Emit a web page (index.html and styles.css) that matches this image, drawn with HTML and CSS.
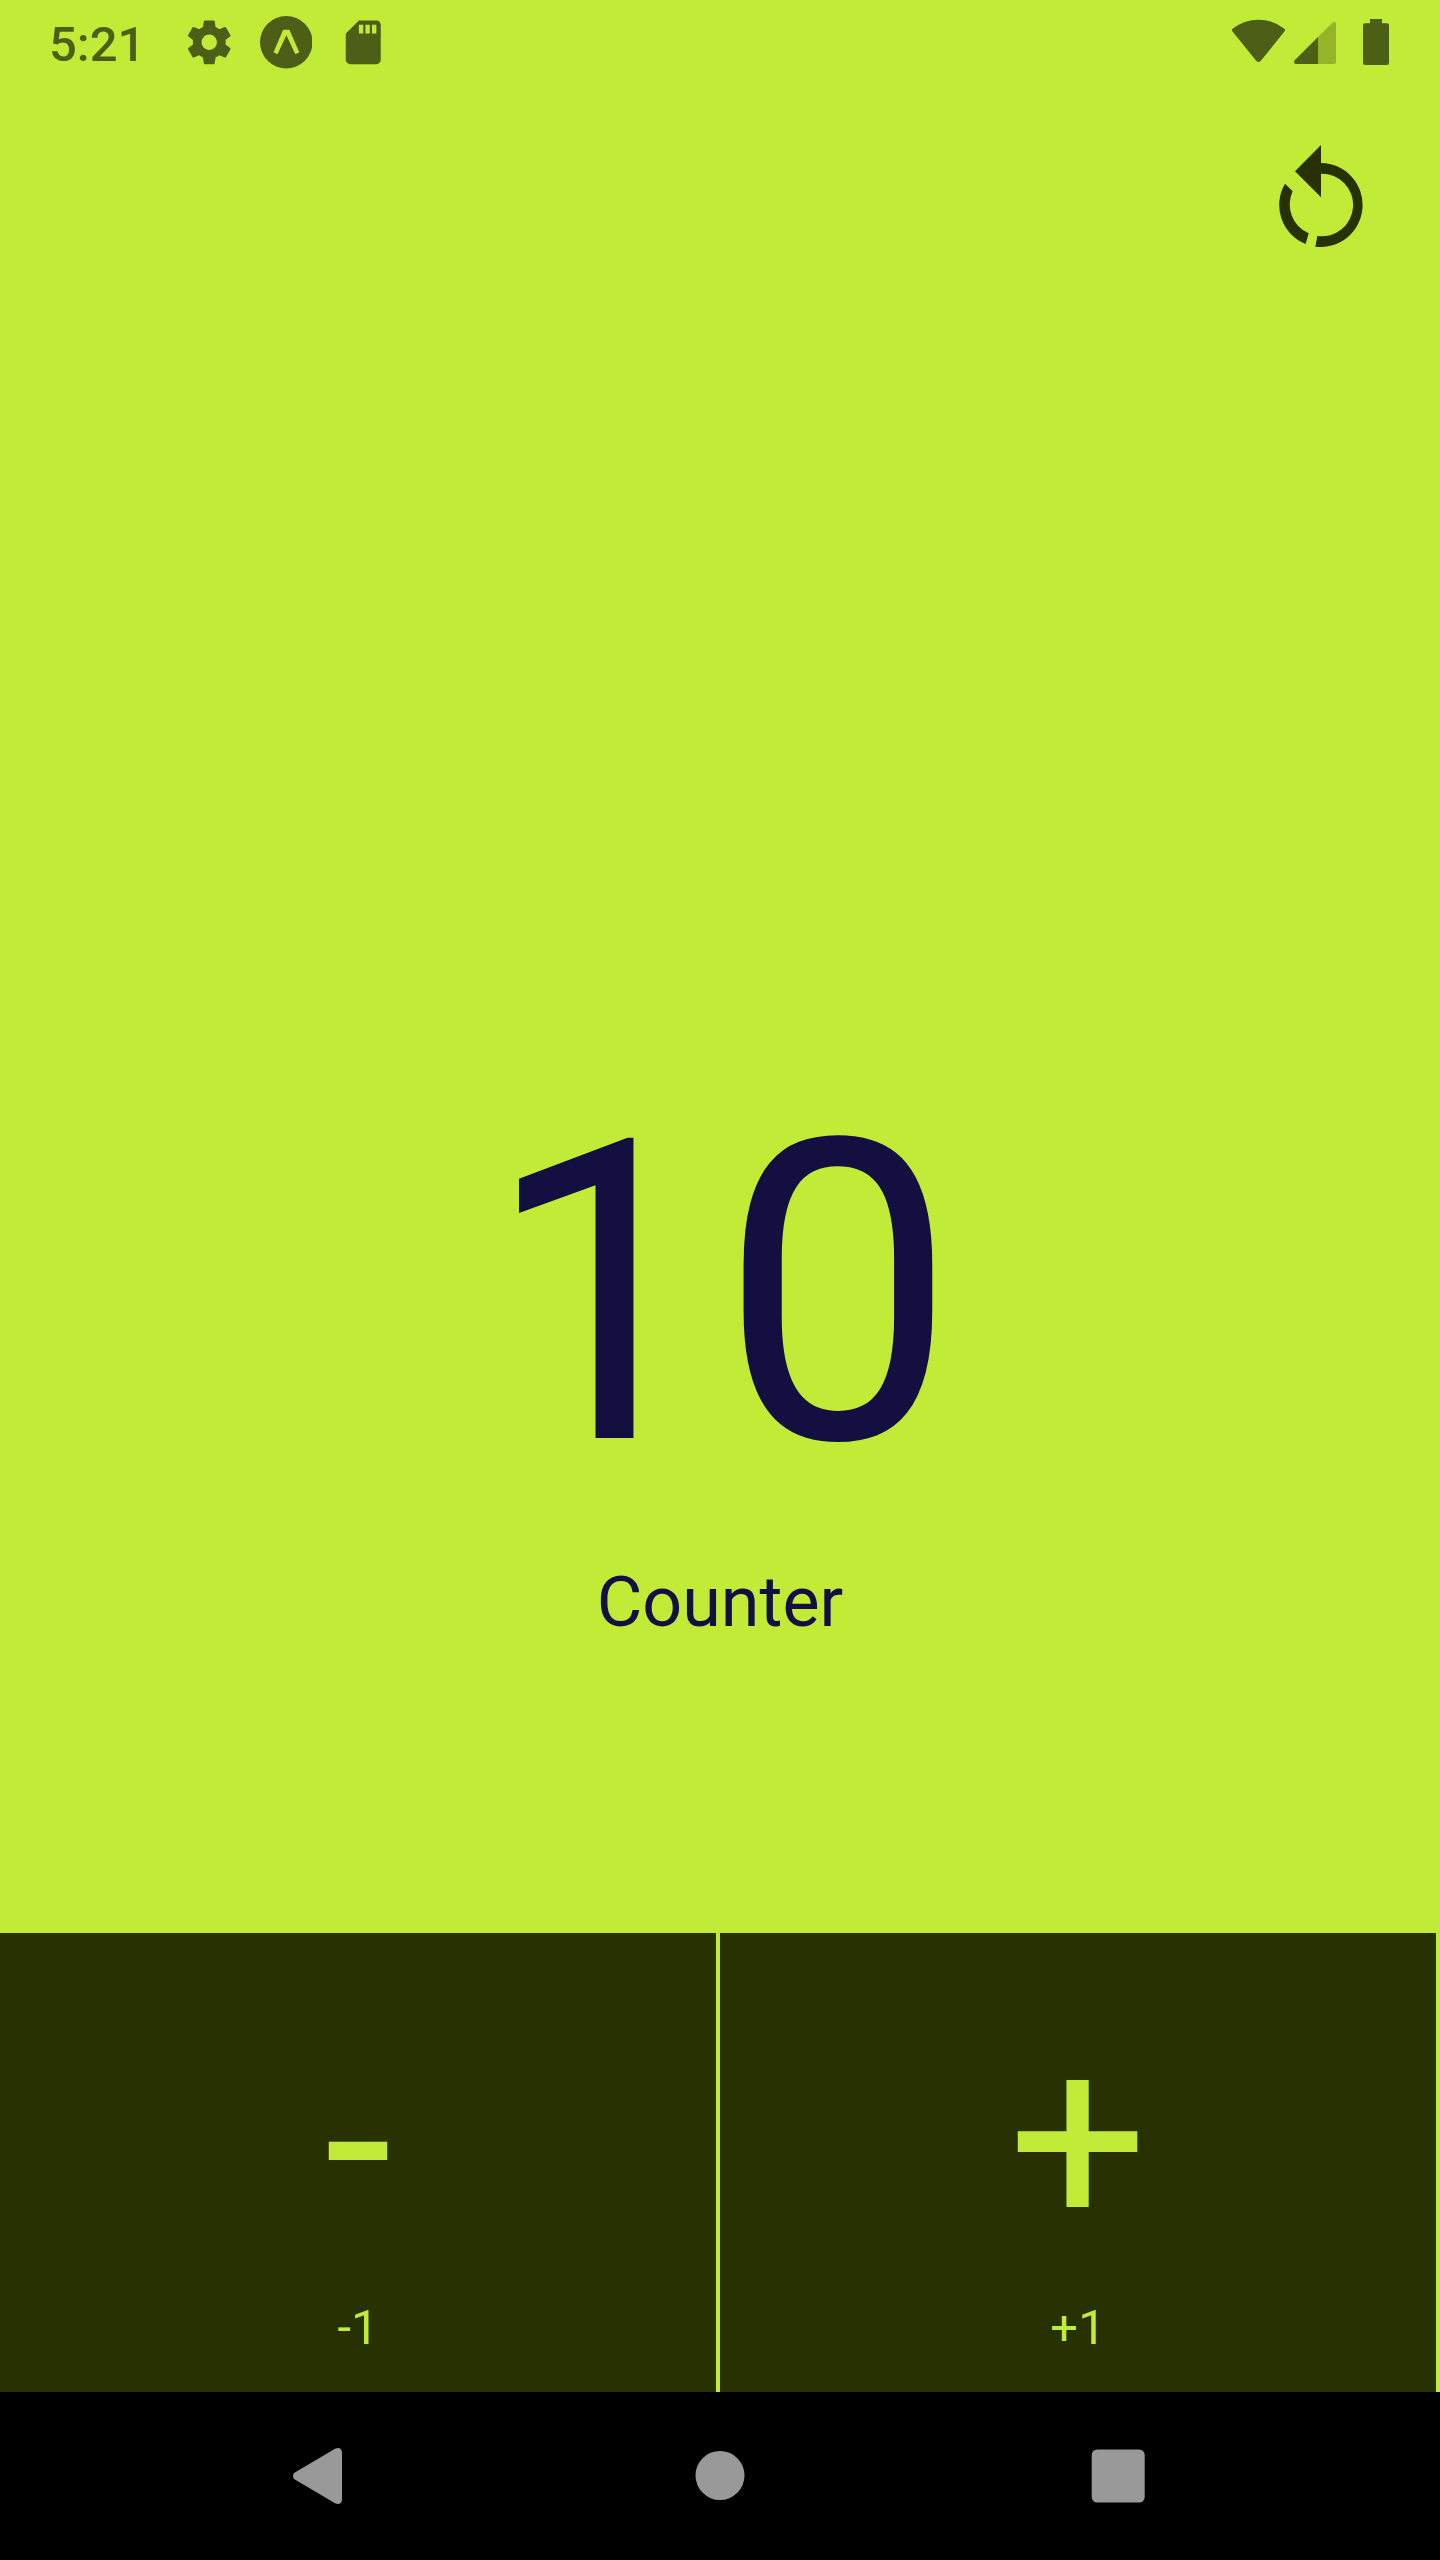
FILE: index.html
```html
<!DOCTYPE html>
<html lang="en">
<head>
<meta charset="utf-8">
<title>Counter</title>
<link rel="stylesheet" href="styles.css">
</head>
<body>
<div class="screen">
  <header class="status">
    <span class="time">5:21</span>
    <div class="notices">
      <svg class="notice" viewBox="0 0 24 24"><path d="M19.43 12.98c.04-.32.07-.64.07-.98s-.03-.66-.07-.98l2.11-1.65c.19-.15.24-.42.12-.64l-2-3.46c-.12-.22-.39-.3-.61-.22l-2.49 1c-.52-.4-1.08-.73-1.69-.98l-.38-2.65C14.46 2.18 14.25 2 14 2h-4c-.25 0-.46.18-.49.42l-.38 2.65c-.61.25-1.17.59-1.69.98l-2.49-1c-.23-.09-.49 0-.61.22l-2 3.46c-.13.22-.07.49.12.64l2.11 1.65c-.04.32-.07.65-.07.98s.03.66.07.98l-2.11 1.65c-.19.15-.24.42-.12.64l2 3.46c.12.22.39.3.61.22l2.49-1c.52.4 1.08.73 1.69.98l.38 2.65c.03.24.24.42.49.42h4c.25 0 .46-.18.49-.42l.38-2.65c.61-.25 1.17-.59 1.69-.98l2.49 1c.23.09.49 0 .61-.22l2-3.46c.12-.22.07-.49-.12-.64l-2.11-1.65zM12 15.5c-1.93 0-3.5-1.57-3.5-3.5s1.57-3.5 3.5-3.5 3.5 1.57 3.5 3.5-1.57 3.5-3.5 3.5z"/></svg>
      <svg class="notice" viewBox="780 48 159 159"><circle cx="859.500" cy="127.500" r="79.500"/><path class="cutout" d="M850 90h19l30 68-12 6-27-58-27 58-12-6z"/></svg>
      <svg class="notice" viewBox="0 0 24 24"><path d="M18 2h-8L4.020 8 4 20c0 1.100.9 2 2 2h12c1.100 0 2-.9 2-2V4c0-1.100-.9-2-2-2zm-6 6h-2V4h2v4zm3 0h-2V4h2v4zm3 0h-2V4h2v4z"/></svg>
    </div>
    <div class="system">
      <svg class="wifi" viewBox="96 57 159 138"><path d="M98 86Q132 59 175.500 59T253 86Q257 89 254 94L182 183Q175.500 189 169 183L97 94Q94 89 98 86z"/></svg>
      <svg class="signal" viewBox="282 57 126 138"><path class="faint" d="M354 111L397 68Q401 65 405 67 408 69 408 72V186Q408 192 402 192H354z"/><path d="M354 111V192H288Q282 192 282 186 282 183 284 181z"/></svg>
      <svg class="battery" viewBox="489 57 78 138"><path d="M510 57h36v12.500h15q6 0 6 6V189q0 6-6 6h-66q-6 0-6-6V75.500q0-6 6-6h15z"/></svg>
    </div>
  </header>
  <div class="toolbar">
    <svg class="reset" viewBox="237 435 252 306"><path d="M363 435L285 514 363 592V521A94 94 0 1 1 352 708L346 740A126 126 0 1 0 363 489zM255 551A126 126 0 0 0 317 732L326 700A94 94 0 0 1 278 574z"/></svg>
  </div>
  <main class="readout">
    <div class="value">10</div>
    <div class="label">Counter</div>
  </main>
  <div class="actions">
    <div class="action"><span class="sign">-</span><span class="step">-1</span></div>
    <div class="action"><span class="sign">+</span><span class="step">+1</span></div>
  </div>
  <nav class="navbar">
    <svg class="key" viewBox="0 0 56 56"><path d="M5 25L46 .8Q52 -1.500 53 4V52Q52 57.500 46 55.200L5 31Q3 28 5 25z"/></svg>
    <svg class="key" viewBox="0 0 56 56"><circle cx="30" cy="27.500" r="24.500"/></svg>
    <svg class="key" viewBox="0 0 56 56"><rect x="1.700" y="1.500" width="53" height="53" rx="5.500"/></svg>
  </nav>
</div>
</body>
</html>
```
FILE: styles.css
```css
* { box-sizing: border-box; }
body {
  margin: 0;
  font-family: Roboto, "Liberation Sans", sans-serif;
}
svg { display: block; }
.screen {
  width: 1440px;
  height: 2560px;
  display: flex;
  flex-direction: column;
  background: #c2eb37;
  overflow: hidden;
}
.status {
  height: 84px;
  padding: 0 51px 0 49px;
  display: flex;
  align-items: center;
  color: #4d5f16;
  fill: #4d5f16;
}
.time {
  align-self: flex-start;
  width: 134px;
  margin-top: 16px;
  font-size: 49px;
  font-weight: 500;
  line-height: 57px;
}
.notices { display: flex; gap: 24.300px; margin-top: 0.5px; }
.notice { width: 52.500px; height: 52.500px; }
.cutout { fill: #c2eb37; }
.system { display: flex; margin-left: auto; }
.wifi { width: 53px; height: 46px; margin-right: 9px; }
.signal { width: 42px; height: 46px; margin-right: 27px; }
.battery { width: 26px; height: 46px; }
.faint { fill: #95b42a; }
.toolbar {
  height: 164px;
  padding: 61px 77px 0 0;
  display: flex;
  justify-content: flex-end;
}
.reset { width: 84px; height: 102px; fill: #273102; }
.readout {
  flex: 1;
  padding-top: 801px;
  color: #130f40;
  text-align: center;
}
.value { font-size: 420px; line-height: 492px; }
.label { font-size: 70px; line-height: 82px; margin-top: 20px; }
.actions { height: 459px; display: flex; }
.action {
  flex: 1;
  display: flex;
  flex-direction: column;
  align-items: center;
  padding-top: 65px;
  background: #273102;
  color: #c2eb37;
  border-right: 4px solid #c2eb37;
}
.sign { font-size: 245px; line-height: 288px; }
.step { font-size: 49px; line-height: 58px; margin-top: 13px; }
.navbar {
  height: 168px;
  padding: 0 294px 0 289px;
  display: flex;
  justify-content: space-between;
  align-items: center;
  background: #000;
  fill: #999;
}
.key { width: 56px; height: 56px; }
```
